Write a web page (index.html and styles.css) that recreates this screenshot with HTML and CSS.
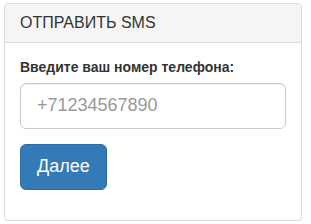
FILE: index.html
```html
<!DOCTYPE html>
<html lang="ru">
<head>
    <meta charset="UTF-8">
    <meta name="viewport" content="width=device-width, initial-scale=1.0">
    <title>Отправить SMS</title>
    <link rel="stylesheet" href="styles.css">
</head>
<body>
    <div class="panel">
        <div class="panel-heading">
            <h3 class="panel-title">ОТПРАВИТЬ SMS</h3>
        </div>
        <div class="panel-body">
            <form>
                <div class="form-group">
                    <label for="phone">Введите ваш номер телефона:</label>
                    <input id="phone" class="form-control" type="tel" placeholder="+71234567890">
                </div>
                <div class="form-group">
                    <button type="button" class="btn">Далее</button>
                </div>
            </form>
        </div>
    </div>
</body>
</html>
```

FILE: styles.css
```css
* {
    box-sizing: border-box;
}
body {
    margin: 0;
    padding: 3px 9px 0 4px;
    font-family: "Liberation Sans", Arial, sans-serif;
    font-size: 14px;
    line-height: 1.42857;
    color: #333;
    background-color: #fff;
}
.panel {
    width: 298px;
    border: 1px solid #ddd;
    border-radius: 4px;
    background-color: #fff;
    box-shadow: 0 1px 1px rgba(0, 0, 0, 0.05);
}
.panel-heading {
    padding: 10px 15px;
    border-bottom: 1px solid #ddd;
    border-radius: 3px 3px 0 0;
    background-color: #f5f5f5;
}
.panel-title {
    margin: 0;
    font-size: 16px;
    font-weight: normal;
    line-height: 1.1;
    color: #333;
}
.panel-body {
    padding: 15px;
}
form {
    margin: 0;
}
.form-group {
    margin-bottom: 15px;
}
label {
    display: inline-block;
    margin-bottom: 5px;
    font-weight: bold;
}
.form-control {
    display: block;
    width: 100%;
    height: 46px;
    padding: 10px 16px;
    font-family: inherit;
    font-size: 18px;
    line-height: 1.33333;
    color: #555;
    border: 1px solid #ccc;
    border-radius: 6px;
    background-color: #fff;
    box-shadow: inset 0 1px 1px rgba(0, 0, 0, 0.075);
}
.form-control::placeholder {
    color: #999;
}
.btn {
    display: inline-block;
    padding: 10px 16px;
    font-family: inherit;
    font-size: 18px;
    line-height: 1.33333;
    color: #fff;
    border: 1px solid #2e6da4;
    border-radius: 6px;
    background-color: #337ab7;
    cursor: pointer;
}
```
